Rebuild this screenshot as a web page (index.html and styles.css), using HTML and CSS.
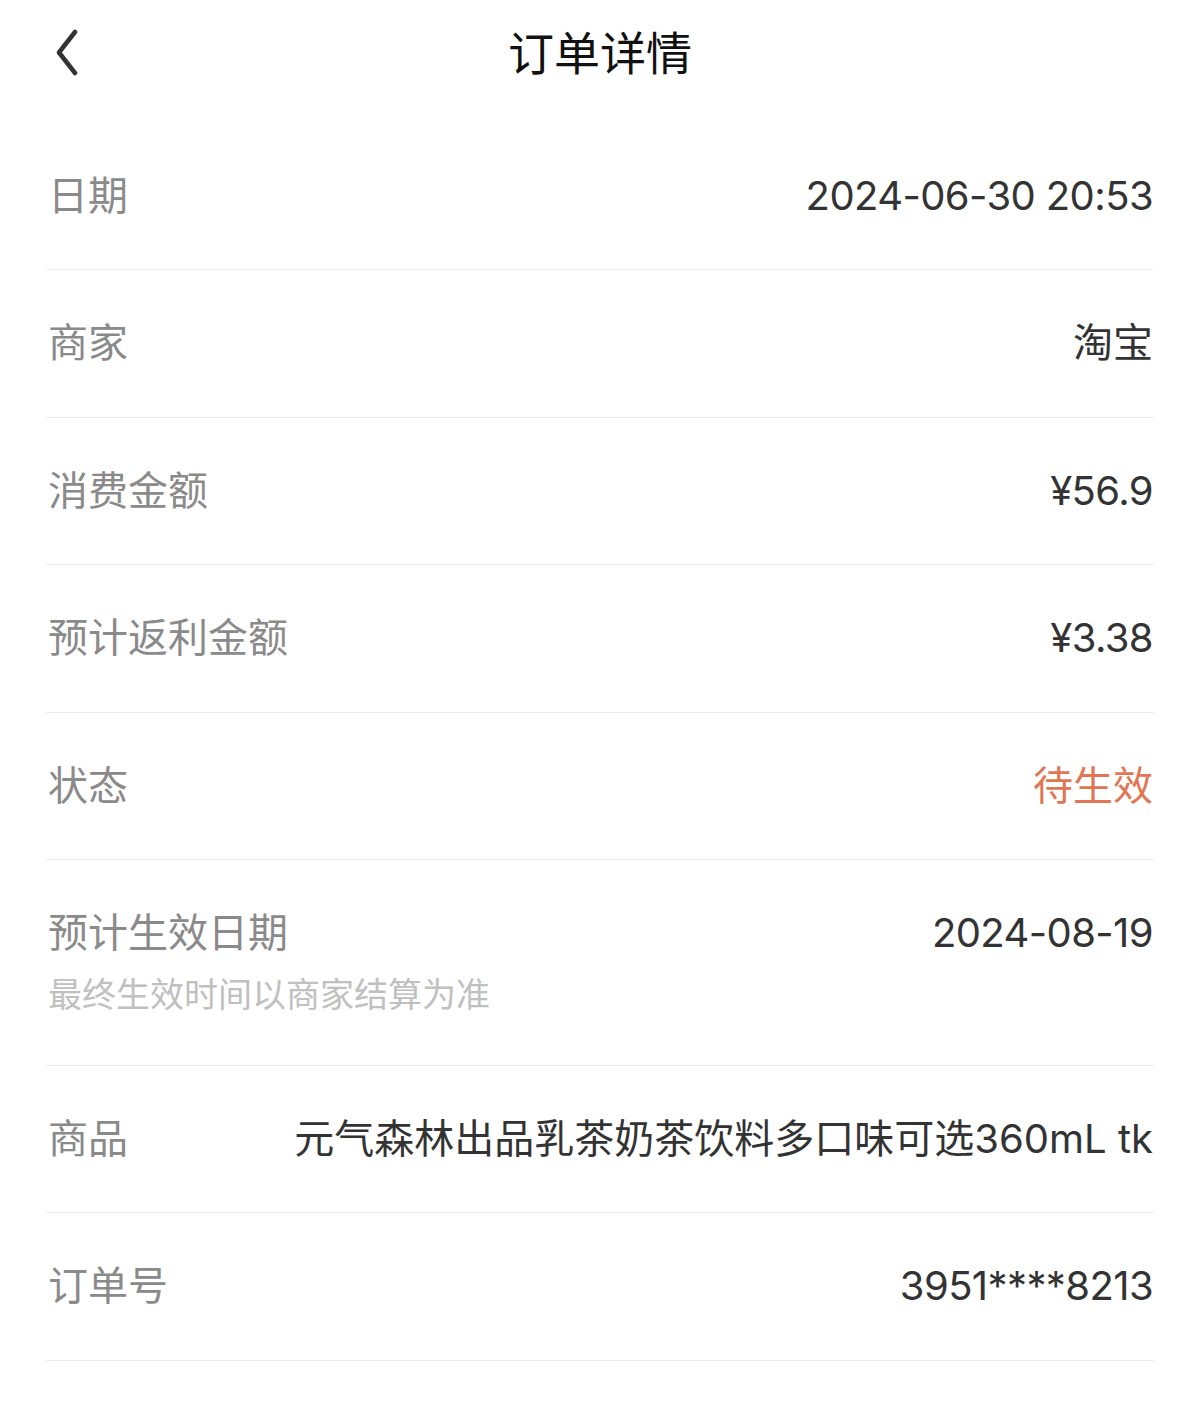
FILE: index.html
```html
<!DOCTYPE html>
<html>
<head>
<meta charset="utf-8">
<title>订单详情</title>
<link rel="stylesheet" href="styles.css">
</head>

<body>
<div class="head">
	<a class="back" href="#">
		<svg width="24" height="48" viewBox="0 0 24 48"><polyline points="19,3 3,23.5 19,44" fill="none" stroke="#333" stroke-width="4.5" stroke-linecap="round" stroke-linejoin="round"/></svg>
	</a>
	<h1>订单详情</h1>
</div>

<div class="list">
	<div class="row">
		<div class="label">日期</div>
		<div class="val num">2024-06-30 20:53</div>
	</div>
	<div class="row">
		<div class="label">商家</div>
		<div class="val">淘宝</div>
	</div>
	<div class="row">
		<div class="label">消费金额</div>
		<div class="val num">¥56.9</div>
	</div>
	<div class="row">
		<div class="label">预计返利金额</div>
		<div class="val num">¥3.38</div>
	</div>
	<div class="row">
		<div class="label">状态</div>
		<div class="val val_warn">待生效</div>
	</div>
	<div class="row row_top">
		<div class="label">预计生效日期
			<p class="tip">最终生效时间以商家结算为准</p>
		</div>
		<div class="val num">2024-08-19</div>
	</div>
	<div class="row">
		<div class="label">商品</div>
		<div class="val">元气森林出品乳茶奶茶饮料多口味可选360mL tk</div>
	</div>
	<div class="row">
		<div class="label">订单号</div>
		<div class="val num">3951****8213</div>
	</div>
</div>
</body>
</html>
```

FILE: styles.css
```css
body,div,h1,p {margin: 0;padding: 0;}
body {background: #fff;font-family: Inter, "Noto Sans CJK SC", sans-serif;color: #333;}
.head {position: relative;height: 122.5px;padding-top: 25px;box-sizing: border-box;}
.head h1 {height: 56px;line-height: 56px;text-align: center;font-size: 46px;font-weight: 400;color: #111;}
.back {position: absolute;left: 56px;top: 29px;display: block;width: 24px;height: 48px;}
.back svg {display: block;}
.list {padding: 0 46px;}
.row {display: flex;justify-content: space-between;align-items: center;padding: 45.25px 0;border-bottom: 1px solid #ededed;line-height: 56px;font-size: 40px;}
.row_top {align-items: flex-start;}
.label {flex-shrink: 0;padding-left: 2px;color: #8a8a8a;white-space: nowrap;}
.val {padding-right: 1px;text-align: right;white-space: nowrap;}
.num {letter-spacing: -0.6px;}
.val_warn {color: #e27654;}
.tip {margin-top: 10px;line-height: 48px;font-size: 34px;color: #c0c0c0;}
```
